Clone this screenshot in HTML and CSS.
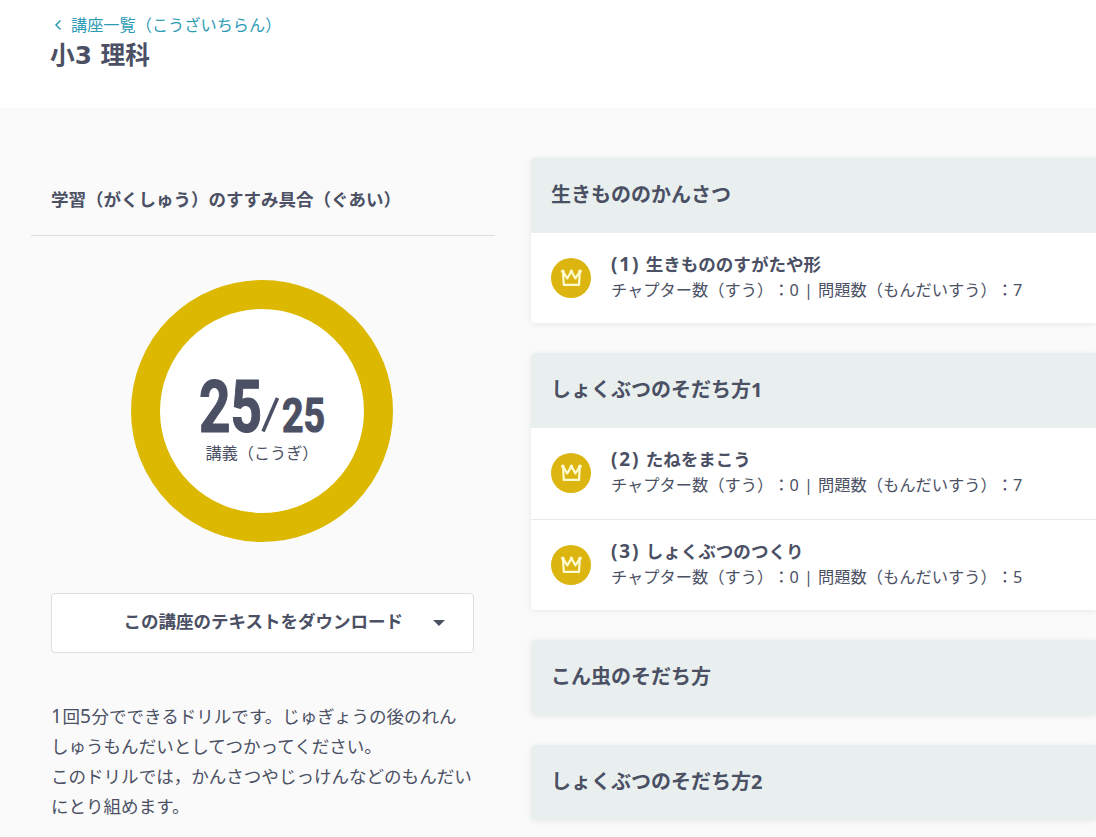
FILE: index.html
```
<!doctype html>
<html lang="ja">
<head>
    <meta charset="utf-8">
    <title>小3 理科</title>
    <link rel="stylesheet" href="styles.css">
</head>
<body>

    <!-- crown icon, used by every lecture -->
    <svg class="Defs" width="0" height="0">
        <symbol id="crown" viewBox="0 0 40 40">
            <path d="M12 13.5 L12.8 26.9 H28 L28.8 13.5 L24.4 20.4 L20.4 13.2 L16.3 20.4 Z" fill="none" stroke="#fffbd0" stroke-width="2.2" stroke-linejoin="round" />
            <circle cx="11.8" cy="13.2" r="1.8" fill="#fffbd0" />
            <circle cx="20.4" cy="13.2" r="1.6" fill="#fffbd0" />
            <circle cx="29" cy="13.2" r="1.8" fill="#fffbd0" />
        </symbol>
    </svg>

    <header class="Header">
        <a class="Back" href="#">
            <svg width="8" height="12" viewBox="0 0 8 12"><path d="M6.5 1.5 L2 6 L6.5 10.5" fill="none" stroke="currentColor" stroke-width="1.5" /></svg>
            <span>講座一覧（こうざいちらん）</span>
        </a>
        <h1>小3 理科</h1>
    </header>

    <main class="Main">

        <!-- progress -->
        <aside class="Side">
            <h2>学習（がくしゅう）のすすみ具合（ぐあい）</h2>
            <div class="Progress">
                <svg class="Count" width="126" height="60" viewBox="0 0 126 60">
                    <text x="0" y="54.5" font-size="72" textLength="63" lengthAdjust="spacingAndGlyphs">25</text>
                    <path d="M64 54.5 L78.5 21" stroke="#4b5064" stroke-width="3.6" />
                    <text x="83" y="54.5" font-size="48" textLength="43" lengthAdjust="spacingAndGlyphs">25</text>
                </svg>
                <div class="Unit">講義（こうぎ）</div>
            </div>
            <button class="Download">
                <span>この講座のテキストをダウンロード</span>
                <i class="Caret"></i>
            </button>
            <p><span class="Digit">1</span>回<span class="Digit">5</span>分でできるドリルです。じゅぎょうの後のれん<br>しゅうもんだいとしてつかってください。<br>このドリルでは，かんさつやじっけんなどのもんだい<br>にとり組めます。</p>
        </aside>

        <!-- chapters -->
        <div class="Chapters">
            <section class="Card">
                <h3>生きもののかんさつ</h3>
                <div class="Lecture">
                    <svg class="Badge"><use href="#crown" /></svg>
                    <div>
                        <h4><span class="Number">(1)</span> 生きもののすがたや形</h4>
                        <div class="Meta">チャプター数（すう）：0 | 問題数（もんだいすう）：7</div>
                    </div>
                </div>
            </section>

            <section class="Card">
                <h3>しょくぶつのそだち方1</h3>
                <div class="Lecture">
                    <svg class="Badge"><use href="#crown" /></svg>
                    <div>
                        <h4><span class="Number">(2)</span> たねをまこう</h4>
                        <div class="Meta">チャプター数（すう）：0 | 問題数（もんだいすう）：7</div>
                    </div>
                </div>
                <div class="Lecture">
                    <svg class="Badge"><use href="#crown" /></svg>
                    <div>
                        <h4><span class="Number">(3)</span> しょくぶつのつくり</h4>
                        <div class="Meta">チャプター数（すう）：0 | 問題数（もんだいすう）：5</div>
                    </div>
                </div>
            </section>

            <section class="Card">
                <h3>こん虫のそだち方</h3>
            </section>

            <section class="Card">
                <h3>しょくぶつのそだち方2</h3>
            </section>
        </div>

    </main>

</body>
</html>
```

FILE: styles.css
```
*, *:before, *:after {
    box-sizing: border-box;
    margin: 0;
    padding: 0;
}

body {
    height: 837px;
    overflow: hidden;
    background: #fafafa;
    color: #4b5064;
    font-family: "Noto Sans", "Noto Sans CJK JP", sans-serif;
    text-spacing-trim: space-all;
    white-space: nowrap;
}

.Defs {
    display: block;
}

.Header {
    height: 108px;
    padding: 13px 50px 0;
    background: #fff;
}

.Back {
    display: flex;
    align-items: center;
    gap: 9px;
    height: 24px;
    padding-left: 4px;
    color: #2e9bb5;
    font-size: 16.2px;
    line-height: 24px;
    text-decoration: none;
}

h1 {
    font-family: "DejaVu Sans", "Noto Sans CJK JP", sans-serif;
    font-size: 24.7px;
    line-height: 37px;
}

.Main {
    display: flex;
    align-items: flex-start;
    gap: 36px;
    padding: 50px 0 0 31px;
}

.Side {
    flex: none;
    width: 464px;
}

.Side h2 {
    height: 78px;
    padding: 28px 20px 0;
    border-bottom: 1px solid #dcdedf;
    font-size: 17.5px;
    line-height: 26px;
}

.Progress {
    display: flex;
    flex-direction: column;
    align-items: center;
    width: 262px;
    height: 262px;
    margin: 44px auto 51px 100px;
    padding-top: 68px;
    border: 29.5px solid #dcb800;
    border-radius: 50%;
    background: #fff;
}

.Count {
    flex: none;
    overflow: visible;
    fill: #4b5064;
    font-family: Roboto, sans-serif;
    font-weight: bold;
}

.Count text {
    stroke: #4b5064;
    stroke-width: 1.2px;
}

.Unit {
    font-size: 16.15px;
    line-height: 32px;
}

.Download {
    display: flex;
    align-items: center;
    justify-content: flex-end;
    gap: 30px;
    width: 423px;
    height: 60px;
    margin-left: 20px;
    padding: 0 28px 5px 0;
    border: 1px solid #dcdedf;
    border-radius: 4px;
    background: #fff;
    color: inherit;
    font-family: inherit;
    font-size: 17.5px;
    font-weight: bold;
}

.Caret {
    margin-top: 5px;
    border: 6px solid transparent;
    border-top-color: #4b5064;
    border-bottom: 0;
}

.Side p {
    margin: 48px 0 0 20px;
    font-size: 17.55px;
    line-height: 30px;
}

.Digit {
    font-size: 19px;
    line-height: 1;
    letter-spacing: 0.6px;
}

.Chapters {
    flex: 1;
    min-width: 0;
}

.Card {
    margin-bottom: 30px;
    border-radius: 4px 0 0 4px;
    background: #fff;
    box-shadow: 0 1px 6px rgba(0, 0, 0, 0.08);
    overflow: hidden;
}

.Card h3 {
    height: 75px;
    padding: 21px 20px 0;
    background: #e8efee;
    font-size: 20px;
    line-height: 31px;
}

.Lecture {
    display: flex;
    align-items: center;
    gap: 20px;
    height: 90px;
    padding: 0 20px;
}

.Lecture:not(:last-child) {
    height: 92px;
    padding-bottom: 1px;
    border-bottom: 1px solid #e7ebeb;
}

.Badge {
    flex: none;
    width: 40px;
    height: 40px;
    border-radius: 50%;
    background: #dcb510;
}

h4 {
    margin-top: -2px;
    font-size: 17.55px;
    line-height: 25px;
}

.Number {
    margin-right: 1px;
    font-size: 19px;
    line-height: 1;
    letter-spacing: 1.8px;
}

.Meta {
    font-size: 16.25px;
    line-height: 26px;
    word-spacing: 0.8px;
}
```
